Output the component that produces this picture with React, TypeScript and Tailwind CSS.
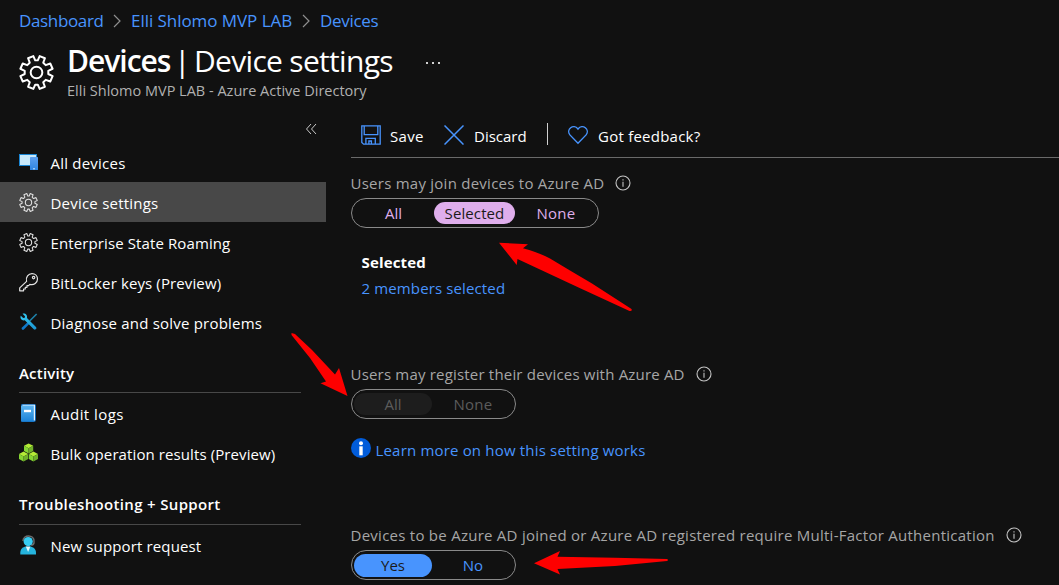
import type { ReactNode } from "react";

const GEAR =
  "M15.3 2.2 L16.9 5.9 H19.1 L20.7 2.2 L25.2 4.1 L23.8 7.9 L25.9 10 L29.8 8.6 L31.8 13.1 L28.1 14.9 V17.6 L31.8 19.4 L29.8 24 L25.9 22.6 L23.8 24.7 L25.2 28.5 L20.7 30.4 L19.1 26.7 H16.9 L15.3 30.4 L10.8 28.5 L12.2 24.7 L10.1 22.6 L6.2 24 L4.2 19.4 L7.9 17.6 V14.9 L4.2 13.1 L6.2 8.6 L10.1 10 L12.2 7.9 L10.8 4.1 Z";

function Gear({ className, stroke, color = "#fff" }: { className: string; stroke: number; color?: string }) {
  return (
    <svg className={className} viewBox="3 1.3 30 30" fill="none" stroke={color} strokeWidth={stroke} strokeLinejoin="round">
      <path d={GEAR} />
      <circle cx="18" cy="16.3" r="5" />
    </svg>
  );
}

function DevicesIcon() {
  return (
    <svg className="h-5 w-5" viewBox="0 0 20 20">
      <defs>
        <linearGradient id="phone" x1="0" y1="0" x2="0" y2="1">
          <stop offset="0" stopColor="#5ea0ef" />
          <stop offset="1" stopColor="#2f86e4" />
        </linearGradient>
      </defs>
      <rect x="0.5" y="2.5" width="17" height="11" fill="#c9e9fb" stroke="#1a86d4" />
      <rect x="11" y="5" width="8" height="13" rx="0.6" fill="url(#phone)" />
      <rect x="14" y="16.3" width="2" height="1" fill="#cfe6fb" />
    </svg>
  );
}

function KeyIcon() {
  return (
    <svg className="h-5 w-5" viewBox="0 0 20 20" fill="none" stroke="#e4e4e4" strokeWidth="1.2" strokeLinejoin="round">
      <path d="M7.6 9.4 C6.4 5.2 9.4 1.6 13 1.6 C16.2 1.6 18.5 4 18.5 7 C18.5 10.6 15 13.4 10.8 12.3 L9.6 13.6 H8 V15.3 H6.3 V17 H4.6 V18.8 H0.7 V15.9 Z" />
      <circle cx="14.6" cy="5.6" r="1.2" />
    </svg>
  );
}

function ToolsIcon() {
  return (
    <svg className="h-5 w-5" viewBox="0 0 20 20">
      <defs>
        <linearGradient id="wrench" x1="0" y1="0" x2="1" y2="1">
          <stop offset="0" stopColor="#35cdf2" />
          <stop offset="1" stopColor="#1b93d2" />
        </linearGradient>
      </defs>
      <path d="M17.6 2 L10.6 9" stroke="#1f83ac" strokeWidth="1.6" />
      <path d="M9.3 9.6 L3 15.6 A1.3 1.3 0 0 0 4.9 17.5 L11 11.2 Z" fill="#0f78c8" />
      <path d="M3.6 1.8 L6 4.2 L5.8 5.8 L4.2 6 L1.8 3.7 C0.7 6.3 2.8 9 5.8 8.3 L14.8 17.3 C16.3 18.6 18.4 16.6 17 15.1 L8 6.1 C8.7 3.2 6.2 0.9 3.6 1.8 Z" fill="url(#wrench)" />
    </svg>
  );
}

function LogIcon() {
  return (
    <svg className="h-5 w-5" viewBox="0 0 20 20">
      <defs>
        <linearGradient id="book" x1="0" y1="0" x2="0" y2="1">
          <stop offset="0" stopColor="#5cb4f0" />
          <stop offset="1" stopColor="#1c83d8" />
        </linearGradient>
      </defs>
      <path d="M3.4 1 H15.5 Q17 1 17 2.5 V16 Q17 19 15 19 H3.6 Q2 19 2 17.4 V2.4 Q2 1 3.4 1 Z" fill="#1269b8" />
      <path d="M3.4 1.8 H16 V17.5 H4 Z" fill="#e3f3fd" />
      <path d="M3 2.6 H14.8 V18.6 H3.6 Q2 18.6 2 17.4 V3.6 Q2 2.6 3 2.6 Z" fill="url(#book)" />
      <rect x="5" y="6.8" width="7" height="2.4" fill="#fff" />
    </svg>
  );
}

function Cube({ x, y }: { x: number; y: number }) {
  return (
    <g transform={`translate(${x} ${y})`}>
      <path d="M4.6 0 L9.2 2.4 L4.6 4.9 L0 2.4 Z" fill="#b4ec36" />
      <path d="M0 2.4 L4.6 4.9 V10 L0 7.5 Z" fill="#86d633" />
      <path d="M9.2 2.4 L4.6 4.9 V10 L9.2 7.5 Z" fill="#6fb02a" />
    </g>
  );
}

function CubesIcon() {
  return (
    <svg className="h-5 w-5" viewBox="0 0 20 20">
      <Cube x={5} y={0.4} />
      <Cube x={0} y={8.6} />
      <Cube x={9.8} y={8.6} />
    </svg>
  );
}

function SupportIcon() {
  return (
    <svg className="h-5 w-5" viewBox="0 0 20 20">
      <path d="M4 6 C3.6 -0.6 15.6 -1 15 6.4 V8 Q14.6 10 12 10" fill="none" stroke="#6d6d6d" strokeWidth="1.4" />
      <path d="M1.3 19.4 V17.6 C1.5 13.6 4 12.2 6.6 11.6 H11.4 C14 12.2 16.8 13.6 17 17.6 V19.4 Z" fill="#25b4dd" />
      <path d="M6.8 11.4 H11.4 L9.1 17 Z" fill="#e9fafd" />
      <circle cx="9.2" cy="6.6" r="4.6" fill="#36cdf3" />
    </svg>
  );
}

function InfoIcon() {
  return (
    <svg className="h-4 w-4 shrink-0" viewBox="0 0 16 16" fill="none" stroke="#c4c4c4">
      <circle cx="8" cy="8" r="7" strokeWidth="1.1" />
      <path d="M8 6.8 V11.8 M8 4.2 V5.6" strokeWidth="1.1" />
    </svg>
  );
}

function Crumb() {
  return (
    <svg className="h-3.5 w-2" viewBox="0 0 8 14" fill="none" stroke="#8f8f8f" strokeWidth="1.2">
      <path d="M1 1 L7 7 L1 13" />
    </svg>
  );
}

function Item({ icon, text, active }: { icon: ReactNode; text: ReactNode; active?: boolean }) {
  return (
    <li className={active ? "flex h-10 items-center bg-[#484848] pl-[19px]" : "flex h-10 items-center pl-[19px]"}>
      <span className="flex h-5 w-[31.5px] items-center">{icon}</span>
      <span className="pt-px whitespace-nowrap">{text}</span>
    </li>
  );
}

function Section({ children }: { children: ReactNode }) {
  return (
    <h2 className="ml-[19px] flex w-[282px] items-center border-b border-[#484848] font-semibold text-white">
      {children}
    </h2>
  );
}

function Label({ children }: { children: ReactNode }) {
  return (
    <div className="-ml-[0.5px] flex h-5 items-center gap-[11px] whitespace-nowrap text-[#a6a6a6]">
      {children}
      <InfoIcon />
    </div>
  );
}

export default function App() {
  return (
    <div className="relative flex h-[585px] w-[1059px] flex-col overflow-hidden bg-[#111111] font-['Open_Sans','Noto_Sans',sans-serif] text-[15px] leading-5 text-white">
      <nav className="flex h-[42px] items-center pl-[19px] text-[17px] text-[#4894fe]">
        <span className="w-[94px] tracking-[-0.35px]">Dashboard</span>
        <Crumb />
        <span className="ml-[10px] w-[171px] tracking-[-0.05px] whitespace-nowrap">Elli Shlomo MVP LAB</span>
        <Crumb />
        <span className="ml-[10px] tracking-[-0.3px]">Devices</span>
      </nav>
      <header className="flex h-[78px] pl-[19px]">
        <Gear className="mt-[13px] h-[35px] w-[35px]" stroke={1.7} />
        <div className="ml-[13px]">
          <h1 className="flex h-[38px] w-[374px] items-center whitespace-nowrap text-[30px] leading-[38px]">
            <span className="w-[107px] font-semibold tracking-[-1px]">Devices</span>
            <span className="w-[20px]">|</span>
            <span className="tracking-[-0.69px]">Device settings</span>
            <svg className="mt-[3px] ml-auto h-1 w-4" viewBox="0 0 16 4" fill="#d0d0d0">
              <rect x="1" y="1" width="2" height="2" />
              <rect x="7" y="1" width="2" height="2" />
              <rect x="13" y="1" width="2" height="2" />
            </svg>
          </h1>
          <p className="mt-px text-[14.5px] text-[#b0b0b0]">Elli Shlomo MVP LAB - Azure Active Directory</p>
        </div>
      </header>
      <div className="flex flex-1">
        <aside className="w-[326px]">
          <div className="flex h-[22px] justify-end pt-[3px] pr-[9px]">
            <svg className="h-3 w-3" viewBox="0 0 12 12" fill="none" stroke="#c8c8c8">
              <path d="M6 1 L1.5 6 L6 11 M11 1 L6.5 6 L11 11" />
            </svg>
          </div>
          <ul>
            <Item icon={<DevicesIcon />} text={<span className="tracking-[0.22px]">All devices</span>} />
            <Item active icon={<Gear className="h-[19px] w-[19px]" stroke={1.7} color="#e0e0e0" />} text={<span className="tracking-[0.22px]">Device settings</span>} />
            <Item icon={<Gear className="h-[19px] w-[19px]" stroke={1.7} color="#e0e0e0" />} text={<span className="tracking-[0.11px]">Enterprise State Roaming</span>} />
            <Item icon={<KeyIcon />} text={<span className="tracking-[0.12px]">BitLocker keys (Preview)</span>} />
            <Item icon={<ToolsIcon />} text={<span className="tracking-[0.21px]">Diagnose and solve problems</span>} />
          </ul>
          <div className="flex h-[52px] items-end pb-px">
            <Section><span className="pb-[9px] tracking-[0.2px]">Activity</span></Section>
          </div>
          <ul className="-mt-px">
            <Item icon={<LogIcon />} text={<span className="tracking-[0.43px]">Audit logs</span>} />
            <Item icon={<CubesIcon />} text={<span className="tracking-[0.1px]">Bulk operation results (Preview)</span>} />
          </ul>
          <div className="flex h-[53px] items-end pb-px">
            <Section><span className="pb-[10px] tracking-[0.33px]">Troubleshooting + Support</span></Section>
          </div>
          <ul className="-mt-px">
            <Item icon={<SupportIcon />} text={<span className="tracking-[0.14px]">New support request</span>} />
          </ul>
        </aside>
        <main className="ml-[25px] flex-1">
          <div className="flex h-[38px] items-center border-b border-[#6a6a6a] pb-[7px]">
            <svg className="ml-[10px] h-5 w-5" viewBox="0 0 20 20" fill="none" stroke="#4894fe" strokeWidth="1.3">
              <path d="M0.8 0.8 H19.2 V19.2 H2.6 L0.8 17.4 Z M3.2 1 V9.6 H16.8 V1 M4.9 19 V13.3 H14.3 V19 M7.9 19 V16 H10.4 V19" />
            </svg>
            <span className="ml-[9px] w-[54px] pt-[2px] tracking-[0.35px]">Save</span>
            <svg className="h-5 w-5" viewBox="0 0 20 20" fill="none" stroke="#4894fe" strokeWidth="1.5">
              <path d="M0.5 0.5 L19.5 19.5 M19.5 0.5 L0.5 19.5" />
            </svg>
            <span className="ml-[10px] w-[73px] pt-[2px]">Discard</span>
            <span className="-mt-[2px] h-[22px] w-px bg-[#d0d0d0]" />
            <svg className="ml-[20px] h-5 w-5" viewBox="0 0 20 20" fill="none" stroke="#4894fe" strokeWidth="1.4">
              <path d="M10 18.2 L1.9 9.9 C-2.2 4.6 5.4 -2 10 4 C14.6 -2 22.2 4.6 18.1 9.9 Z" />
            </svg>
            <span className="ml-[10px] pt-[2px] tracking-[0.24px]">Got feedback?</span>
          </div>
          <div className="mt-[15px]">
            <Label><span className="tracking-[0.25px]">Users may join devices to Azure AD</span></Label>
          </div>
          <div className="mt-[5px] flex h-[30px] w-[248px] items-center rounded-full border border-[#8a8a8a] pl-px text-[#dfaeec]">
            <span className="w-[81px] text-center">All</span>
            <span className="h-[22px] w-[81px] rounded-full bg-[#dfaeec] text-center leading-[22px] tracking-[0.1px] text-[#1b1a19]">Selected</span>
            <span className="w-[82px] text-center tracking-[0.3px]">None</span>
          </div>
          <div className="mt-6 ml-[10.5px] h-[112px]">
            <p className="font-bold tracking-[0.15px]">Selected</p>
            <p className="mt-[6px] tracking-[0.13px] text-[#4894fe]">2 members selected</p>
          </div>
          <Label><span className="tracking-[0.19px]">Users may register their devices with Azure AD</span></Label>
          <div className="mt-[5px] flex h-[30px] w-[165px] items-center rounded-full border border-[#8a8a8a] pl-[2px] text-[#5c5c5c]">
            <span className="h-[22px] w-[78px] rounded-full bg-[#1d1d1d] text-center leading-[22px]">All</span>
            <span className="w-[82px] text-center tracking-[0.3px]">None</span>
          </div>
          <div className="mt-[19px] flex h-5 text-[#4894fe]">
            <svg className="h-5 w-5" viewBox="0 0 20 20">
              <circle cx="10" cy="10" r="10" fill="#015cda" />
              <circle cx="10" cy="5.2" r="2" fill="#fff" />
              <rect x="8.3" y="8.3" width="3.4" height="9" fill="#fff" />
            </svg>
            <span className="mt-[2px] ml-[4.5px] tracking-[0.18px]">Learn more on how this setting works</span>
          </div>
          <div className="mt-[67px]">
            <Label><span className="tracking-[0.26px]">Devices to be Azure AD joined or Azure AD registered require Multi-Factor Authentication</span></Label>
          </div>
          <div className="mt-[5px] flex h-[30px] w-[165px] items-center rounded-full border border-[#8a8a8a] pl-[2px] text-[#4894fe]">
            <span className="h-[23px] w-[78px] rounded-full bg-[#4894fe] text-center leading-[23px] text-[#1b1a19]">Yes</span>
            <span className="w-[82px] text-center">No</span>
          </div>
        </main>
      </div>
      <svg className="pointer-events-none absolute inset-0 h-[585px] w-[1059px]" viewBox="0 0 1059 585" fill="#fe0000">
        <path d="M499 242.7 L528 244.3 L523 248.3 Q540 253 550 258.5 L570 270.5 L592 283.5 L631.5 309 Q632.5 311.5 629.5 311 L578 287.3 L517.5 259 L516.7 265 Z" />
        <path d="M291.5 333 L295 334 L312 350 L335 374.5 L339 368 L347.5 396 L320.5 383.3 L326 381.5 L310 358 L291.5 335 Z" />
        <path d="M534 563.3 L560 551 L557.5 556.7 L615 557.7 L667 559 Q669 560 667 561 L615 566 L557.5 569 L560 574.5 Z" />
      </svg>
    </div>
  );
}
